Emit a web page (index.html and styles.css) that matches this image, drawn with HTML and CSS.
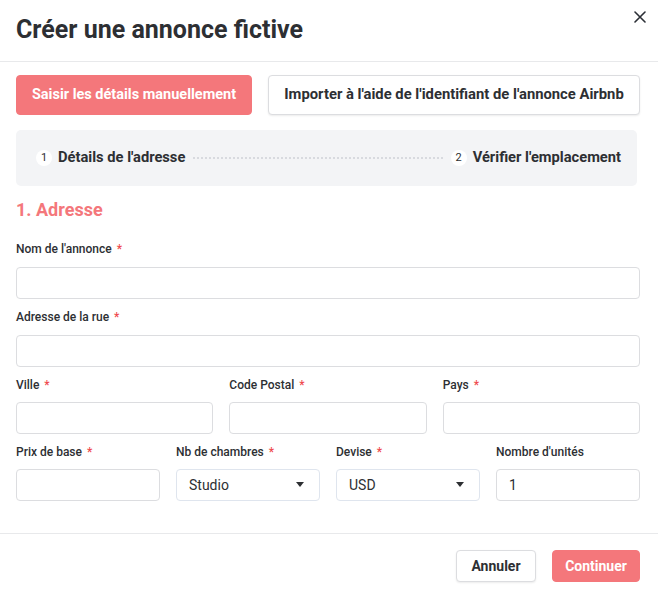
FILE: index.html
```html
<!DOCTYPE html>
<html lang="fr">
    <head>
        <meta charset="utf-8" />
        <title>Créer une annonce fictive</title>
        <link rel="stylesheet" href="styles.css">
    </head>
    <body>
        <div class="modal">
            <div class="modal-head">
                <h2 class="modal-title">Créer une annonce fictive</h2>
                <span class="close">
                    <svg width="12" height="12" viewBox="0 0 12 12"><path d="M1 1L11 11M11 1L1 11" stroke="#2b2f36" stroke-width="1.6" stroke-linecap="round"/></svg>
                </span>
            </div>
            <div class="modal-body">
                <div class="mode-row">
                    <button class="btn btn-primary btn-big">Saisir les détails manuellement</button>
                    <button class="btn btn-default btn-big">Importer à l'aide de l'identifiant de l'annonce Airbnb</button>
                </div>
                <div class="steps">
                    <div class="step"><span class="num">1</span>Détails de l'adresse</div>
                    <div class="step-line"></div>
                    <div class="step"><span class="num">2</span>Vérifier l'emplacement</div>
                </div>
                <h3 class="section-title">1. Adresse</h3>
                <div class="field">
                    <label>Nom de l'annonce <em>*</em></label>
                    <input type="text" />
                </div>
                <div class="field">
                    <label>Adresse de la rue <em>*</em></label>
                    <input type="text" />
                </div>
                <div class="row row-3">
                    <div class="field">
                        <label>Ville <em>*</em></label>
                        <input type="text" />
                    </div>
                    <div class="field">
                        <label>Code Postal <em>*</em></label>
                        <input type="text" />
                    </div>
                    <div class="field">
                        <label>Pays <em>*</em></label>
                        <input type="text" />
                    </div>
                </div>
                <div class="row row-4">
                    <div class="field">
                        <label>Prix de base <em>*</em></label>
                        <input type="text" />
                    </div>
                    <div class="field">
                        <label>Nb de chambres <em>*</em></label>
                        <div class="select">Studio<span class="caret"></span></div>
                    </div>
                    <div class="field">
                        <label>Devise <em>*</em></label>
                        <div class="select">USD<span class="caret"></span></div>
                    </div>
                    <div class="field">
                        <label>Nombre d'unités</label>
                        <input type="text" value="1" />
                    </div>
                </div>
            </div>
            <div class="modal-foot">
                <button class="btn btn-default">Annuler</button>
                <button class="btn btn-primary">Continuer</button>
            </div>
        </div>
    </body>
</html>
```

FILE: styles.css
```css
* { margin: 0; padding: 0; box-sizing: border-box; }
body { font: 13px/1.3 "Roboto", "Noto Sans", sans-serif; color: #2d2f33; background: #fff; }
button, input { font: inherit; color: inherit; }

.modal { width: 658px; background: #fff; }
.modal-head { position: relative; height: 62px; padding: 0 16px; display: flex; align-items: center; border-bottom: 1px solid #e8e9eb; }
.modal-title { font-size: 25px; font-weight: 700; color: #2d2f33; }
.close { position: absolute; right: 12px; top: 11px; }

.modal-body { padding: 13px 18px 21px 16px; }

.btn { border-radius: 4px; font-weight: 700; font-size: 14.5px; cursor: pointer; height: 32px; padding: 0 10px; white-space: nowrap; }
.btn-big { height: 40px; padding: 0 14px; }
.btn-primary { background: #f4777b; border: 1px solid #f4777b; color: #fff; }
.btn-default { background: #fff; border: 1px solid #dcdde0; box-shadow: 0 1px 2px rgba(0,0,0,.08); }

.mode-row { display: flex; gap: 16px; }
.mode-row .btn-primary { width: 236px; }
.mode-row .btn-default { flex: 1; font-size: 14.8px; }

.steps { display: flex; align-items: center; height: 56px; margin: 15px 3px 0 0; padding: 0 16px 0 20px; background: #f3f4f6; border-radius: 5px; }
.step { display: flex; align-items: center; font-weight: 700; font-size: 14.7px; }
.step .num { width: 16px; height: 16px; margin-right: 6px; border-radius: 50%; background: #fff; font-size: 11px; font-weight: 400; display: flex; align-items: center; justify-content: center; }
.step-line { flex: 1; margin: 0 8px; border-top: 2px dotted #d8dadf; }

.section-title { margin: 12px 0 21px; font-size: 18px; font-weight: 700; color: #f4777b; }

.field { margin-bottom: 11px; }
.field label { display: block; font-size: 12px; font-weight: 500; margin-bottom: 9px; }
.field label em { font-style: normal; color: #ef4a4e; margin-left: 2px; }
.field input, .select { display: block; width: 100%; height: 32px; padding: 0 12px; border: 1px solid #dcdde0; border-radius: 4px; background: #fff; outline: none; font-size: 14px; }

.row { display: grid; gap: 16px; }
.row-3 { grid-template-columns: repeat(3, 1fr); }
.row-4 { grid-template-columns: repeat(4, 1fr); }
.row-4 .field label { margin-bottom: 8px; }

.select { display: flex; align-items: center; justify-content: space-between; border-color: #dfe5ee; }
.caret { width: 0; height: 0; border-left: 4.5px solid transparent; border-right: 4.5px solid transparent; border-top: 5px solid #2d2f33; margin-right: 3px; }

.modal-foot { display: flex; justify-content: flex-end; gap: 16px; padding: 16px 18px 10px; border-top: 1px solid #e8e9eb; }
.modal-foot .btn { height: 32px; font-size: 14px; }
.modal-foot .btn-default { width: 80px; }
.modal-foot .btn-primary { width: 88px; }
```
